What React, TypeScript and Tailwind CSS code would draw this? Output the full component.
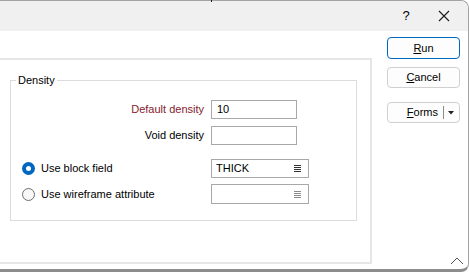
const font = { fontFamily: '"Liberation Sans", Arial, sans-serif' };

const ListIcon = ({ muted }: { muted?: boolean }) => (
    <svg width="9" height="9" viewBox="0 0 9 9" className="shrink-0">
        {[1, 3, 5, 7].map((y) => (
            <line key={y} x1="1" x2="8" y1={y + 0.5} y2={y + 0.5} stroke={muted ? '#8a8a8a' : '#333'} strokeWidth="1" />
        ))}
    </svg>
);

const Radio = ({ checked }: { checked?: boolean }) =>
    checked ? (
        <span className="w-[13px] h-[13px] rounded-full bg-[#0067c0] flex items-center justify-center shrink-0">
            <span className="w-[5px] h-[5px] rounded-full bg-white" />
        </span>
    ) : (
        <span className="w-[13px] h-[13px] rounded-full border border-[#6e6e6e] bg-[#f7f7f7] shrink-0" />
    );

const App = () => {
    return (
        <div className="w-[469px] h-[272px] bg-white overflow-hidden text-[11px] text-black" style={font}>
            <div className="relative w-[469px] h-[272px] flex flex-col border-t border-[#a3a3a3] border-r border-b-[3px] border-b-[#8c8c8c] rounded-tr-[8px] rounded-br-[8px]">
                {/* tick from window behind */}
                <div className="absolute -top-px left-[211px] w-px h-[2px] bg-[#222]" />

                {/* Title bar */}
                <div className="h-[30px] bg-[#f0f0f0] flex items-center justify-end rounded-tr-[8px] shrink-0">
                    <span className="w-[20px] text-center text-[13px] mr-[22px]">?</span>
                    <svg width="12" height="12" viewBox="0 0 12 12" className="mr-[18px]">
                        <path d="M1 1 L11 11 M11 1 L1 11" stroke="#1a1a1a" strokeWidth="1.1" />
                    </svg>
                </div>

                <div className="flex flex-1">
                    {/* Main panel */}
                    <div className="ml-[-2px] mt-[27px] w-[374px] h-[206px] border-2 border-[#e6e6e6] pl-[10px] pt-[20px] shrink-0">
                        <div className="relative w-[347px] h-[141px] border border-[#dcdcdc] pt-[19px]">
                            <span className="absolute -top-[9px] left-[5px] bg-white px-[2px] leading-[16px]">Density</span>

                            <div className="flex items-center h-[19px]">
                                <span className="w-[193px] text-right text-[#851a2e]">Default density</span>
                                <div className="ml-[7px] w-[86px] h-[19px] border border-[#a8a8a8] flex items-center pl-[5px]">10</div>
                            </div>
                            <div className="flex items-center h-[19px] mt-[7px]">
                                <span className="w-[193px] text-right">Void density</span>
                                <div className="ml-[7px] w-[86px] h-[19px] border border-[#a8a8a8]" />
                            </div>

                            <div className="flex items-center h-[19px] mt-[14px]">
                                <div className="w-[200px] flex items-center pl-[11px] gap-[6px]">
                                    <Radio checked />
                                    <span>Use block field</span>
                                </div>
                                <div className="w-[98px] h-[19px] border border-[#a8a8a8] flex items-center justify-between pl-[4px] pr-[6px]">
                                    <span>THICK</span>
                                    <ListIcon />
                                </div>
                            </div>
                            <div className="flex items-center h-[20px] mt-[6px]">
                                <div className="w-[200px] flex items-center pl-[11px] gap-[6px]">
                                    <Radio />
                                    <span>Use wireframe attribute</span>
                                </div>
                                <div className="w-[98px] h-[20px] border border-[#a8a8a8] flex items-center justify-end pr-[6px]">
                                    <ListIcon muted />
                                </div>
                            </div>
                        </div>
                    </div>

                    {/* Buttons */}
                    <div className="flex-1 flex flex-col pl-[15px] pt-[6px]">
                        <button className="w-[73px] h-[22px] rounded-[4px] border border-[#0067c0] bg-[#fdfdfd] flex items-center justify-center">
                            <span><span className="underline">R</span>un</span>
                        </button>
                        <button className="w-[73px] h-[21px] mt-[8px] rounded-[4px] border border-[#d0d0d0] bg-[#fdfdfd] flex items-center justify-center">
                            <span><span className="underline">C</span>ancel</span>
                        </button>
                        <button className="w-[73px] h-[21px] mt-[14px] rounded-[4px] border border-[#d0d0d0] bg-[#fdfdfd] flex items-center">
                            <span className="flex-1 text-right pr-[5px]"><span className="underline">F</span>orms</span>
                            <span className="w-px h-[13px] bg-[#8a8a8a]" />
                            <svg width="15" height="8" viewBox="0 0 15 8">
                                <path d="M4 2 L10 2 L7 5.5 Z" fill="#222" />
                            </svg>
                        </button>
                        <div className="flex-1" />
                        <svg width="14" height="8" viewBox="0 0 14 8" className="self-end mr-[4px] mb-[4px]">
                            <path d="M1 7 L7 1 L13 7" stroke="#555" strokeWidth="1" fill="none" />
                        </svg>
                    </div>
                </div>
            </div>
        </div>
    );
};

export default App;
